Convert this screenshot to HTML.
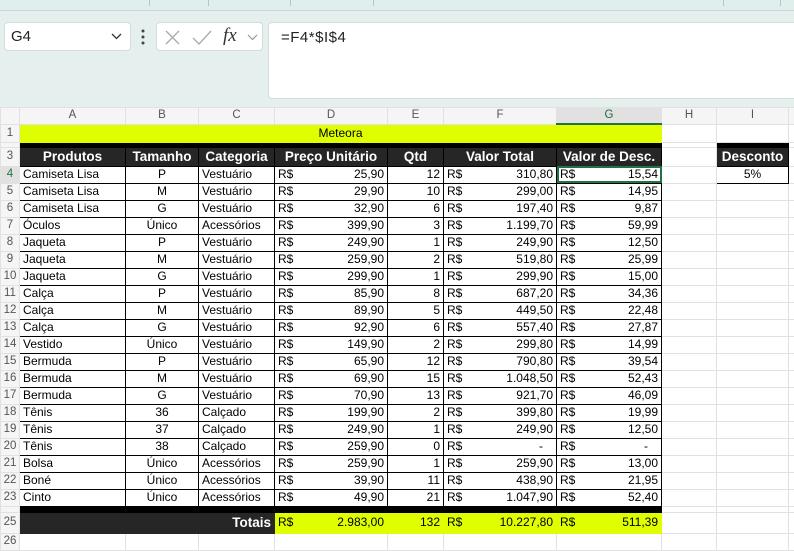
<!DOCTYPE html>
<html><head><meta charset="utf-8">
<style>
*{margin:0;padding:0;box-sizing:border-box}
body{width:794px;height:545px;overflow:hidden;background:#fff;font-family:"Liberation Sans",Arial,sans-serif;position:relative}
.top{position:absolute;left:0;top:0;width:794px;height:107px;background:#e4efee}
.strip{position:absolute;left:0;top:0;width:794px;height:11px;background:#e1eeee;border-bottom:1px solid #c9d6d6}
.strip i{position:absolute;top:0;width:1px;height:6px;background:#b9c4c4}
.nb{position:absolute;left:4px;top:22px;width:127px;height:29px;background:#fff;border:1px solid #d4dcdc;border-radius:4px;font-size:15px;line-height:27px;padding-left:6px;color:#222}
.fb{position:absolute;left:156px;top:22px;width:107px;height:29px;background:#fff;border:1px solid #d4dcdc;border-radius:4px}
.fi{position:absolute;left:268px;top:22px;width:530px;height:77px;background:#fff;border:1px solid #d4dcdc;border-radius:4px;font-size:15px;padding:6px 0 0 12px;color:#222;font-family:"Liberation Sans",sans-serif;letter-spacing:.5px}
table{position:absolute;left:0;top:107px;width:798px;border-collapse:collapse;table-layout:fixed;font-size:12px}
td{height:17px;padding:0 3px;white-space:nowrap;overflow:hidden;border:1px solid #e1e1e1;line-height:15px;color:#000}
tr.ch td{background:#f5f5f5;color:#555;text-align:center;height:16px;border-color:#e1e1e1;font-size:11.5px}
td.rh{background:#f5f5f5;color:#555;text-align:center;font-size:11.5px;padding:0;border-color:#e1e1e1}
.y{background:#dfff00}
.k{background:#000;border-color:#000}
.h{background:#262626;color:#fff;font-weight:bold;font-size:13.5px;text-align:center;border:1px solid #000;padding:0}
.d{border:1px solid #000}
.c{text-align:center}.r{text-align:right}
.m span{float:left}.m{text-align:right}
.sel{outline:2px solid #217346;outline-offset:-2px}
</style></head><body>
<div class="top">
<div class="strip"><i style="left:149px"></i><i style="left:208px"></i><i style="left:290px"></i><i style="left:373px"></i><i style="left:723px"></i><i style="left:780px"></i></div>
<div class="nb">G4<svg style="position:absolute;right:8px;top:10px" width="11" height="7"><path d="M1 1L5.5 5.5L10 1" stroke="#333" stroke-width="1.3" fill="none"/></svg></div>
<svg style="position:absolute;left:141px;top:29px" width="4" height="16"><circle cx="2" cy="2" r="1.5" fill="#444"/><circle cx="2" cy="8" r="1.5" fill="#444"/><circle cx="2" cy="14" r="1.5" fill="#444"/></svg>
<div class="fb">
<svg style="position:absolute;left:8px;top:7px" width="15" height="15"><path d="M1 1L14 14M14 1L1 14" stroke="#aaa" stroke-width="1.3"/></svg>
<svg style="position:absolute;left:35px;top:7px" width="20" height="15"><path d="M1 8L7 14L19 1" stroke="#aaa" stroke-width="1.3" fill="none"/></svg>
<span style="position:absolute;left:66px;top:2px;font-family:'Liberation Serif',serif;font-style:italic;font-size:19px;color:#333">fx</span>
<svg style="position:absolute;left:90px;top:11px" width="11" height="7"><path d="M1 1L5.5 5.5L10 1" stroke="#999" stroke-width="1.2" fill="none"/></svg>
</div>
<div class="fi">=F4*$I$4</div>
</div>
<table>
<colgroup><col style="width:19px"><col style="width:106px"><col style="width:73px"><col style="width:76px"><col style="width:113px"><col style="width:56px"><col style="width:113px"><col style="width:105px"><col style="width:55px"><col style="width:72px"><col style="width:10px"></colgroup>
<tr class="ch"><td></td><td>A</td><td>B</td><td>C</td><td>D</td><td>E</td><td>F</td><td style="background:#e1e1e1;color:#1e6b40;border-bottom:2px solid #217346">G</td><td>H</td><td>I</td><td></td></tr>
<tr><td class="rh" style="height:18px">1</td><td class="y" colspan="7" style="text-align:center;border-color:#dfff00">Meteora</td><td></td><td></td><td></td></tr>
<tr><td class="rh" style="height:5px;font-size:0"></td><td class="k" colspan="7" style="height:5px"></td><td style="height:5px"></td><td class="k" style="height:5px"></td><td style="height:5px"></td></tr>
<tr><td class="rh" style="height:19px">3</td><td class="h">Produtos</td><td class="h">Tamanho</td><td class="h">Categoria</td><td class="h">Preço Unitário</td><td class="h">Qtd</td><td class="h">Valor Total</td><td class="h">Valor de Desc.</td><td></td><td class="h">Desconto</td><td></td></tr>
<tr><td class="rh" style="color:#217346;background:#e1e1e1">4</td><td class="d">Camiseta Lisa</td><td class="d c">P</td><td class="d">Vestuário</td><td class="d m"><span>R$</span>25,90</td><td class="d r">12</td><td class="d m"><span>R$</span>310,80</td><td class="d m sel"><span>R$</span>15,54</td><td></td><td class="d c">5%</td><td></td></tr>
<tr><td class="rh">5</td><td class="d">Camiseta Lisa</td><td class="d c">M</td><td class="d">Vestuário</td><td class="d m"><span>R$</span>29,90</td><td class="d r">10</td><td class="d m"><span>R$</span>299,00</td><td class="d m"><span>R$</span>14,95</td><td></td><td></td><td></td></tr>
<tr><td class="rh">6</td><td class="d">Camiseta Lisa</td><td class="d c">G</td><td class="d">Vestuário</td><td class="d m"><span>R$</span>32,90</td><td class="d r">6</td><td class="d m"><span>R$</span>197,40</td><td class="d m"><span>R$</span>9,87</td><td></td><td></td><td></td></tr>
<tr><td class="rh">7</td><td class="d">Óculos</td><td class="d c">Único</td><td class="d">Acessórios</td><td class="d m"><span>R$</span>399,90</td><td class="d r">3</td><td class="d m"><span>R$</span>1.199,70</td><td class="d m"><span>R$</span>59,99</td><td></td><td></td><td></td></tr>
<tr><td class="rh">8</td><td class="d">Jaqueta</td><td class="d c">P</td><td class="d">Vestuário</td><td class="d m"><span>R$</span>249,90</td><td class="d r">1</td><td class="d m"><span>R$</span>249,90</td><td class="d m"><span>R$</span>12,50</td><td></td><td></td><td></td></tr>
<tr><td class="rh">9</td><td class="d">Jaqueta</td><td class="d c">M</td><td class="d">Vestuário</td><td class="d m"><span>R$</span>259,90</td><td class="d r">2</td><td class="d m"><span>R$</span>519,80</td><td class="d m"><span>R$</span>25,99</td><td></td><td></td><td></td></tr>
<tr><td class="rh">10</td><td class="d">Jaqueta</td><td class="d c">G</td><td class="d">Vestuário</td><td class="d m"><span>R$</span>299,90</td><td class="d r">1</td><td class="d m"><span>R$</span>299,90</td><td class="d m"><span>R$</span>15,00</td><td></td><td></td><td></td></tr>
<tr><td class="rh">11</td><td class="d">Calça</td><td class="d c">P</td><td class="d">Vestuário</td><td class="d m"><span>R$</span>85,90</td><td class="d r">8</td><td class="d m"><span>R$</span>687,20</td><td class="d m"><span>R$</span>34,36</td><td></td><td></td><td></td></tr>
<tr><td class="rh">12</td><td class="d">Calça</td><td class="d c">M</td><td class="d">Vestuário</td><td class="d m"><span>R$</span>89,90</td><td class="d r">5</td><td class="d m"><span>R$</span>449,50</td><td class="d m"><span>R$</span>22,48</td><td></td><td></td><td></td></tr>
<tr><td class="rh">13</td><td class="d">Calça</td><td class="d c">G</td><td class="d">Vestuário</td><td class="d m"><span>R$</span>92,90</td><td class="d r">6</td><td class="d m"><span>R$</span>557,40</td><td class="d m"><span>R$</span>27,87</td><td></td><td></td><td></td></tr>
<tr><td class="rh">14</td><td class="d">Vestido</td><td class="d c">Único</td><td class="d">Vestuário</td><td class="d m"><span>R$</span>149,90</td><td class="d r">2</td><td class="d m"><span>R$</span>299,80</td><td class="d m"><span>R$</span>14,99</td><td></td><td></td><td></td></tr>
<tr><td class="rh">15</td><td class="d">Bermuda</td><td class="d c">P</td><td class="d">Vestuário</td><td class="d m"><span>R$</span>65,90</td><td class="d r">12</td><td class="d m"><span>R$</span>790,80</td><td class="d m"><span>R$</span>39,54</td><td></td><td></td><td></td></tr>
<tr><td class="rh">16</td><td class="d">Bermuda</td><td class="d c">M</td><td class="d">Vestuário</td><td class="d m"><span>R$</span>69,90</td><td class="d r">15</td><td class="d m"><span>R$</span>1.048,50</td><td class="d m"><span>R$</span>52,43</td><td></td><td></td><td></td></tr>
<tr><td class="rh">17</td><td class="d">Bermuda</td><td class="d c">G</td><td class="d">Vestuário</td><td class="d m"><span>R$</span>70,90</td><td class="d r">13</td><td class="d m"><span>R$</span>921,70</td><td class="d m"><span>R$</span>46,09</td><td></td><td></td><td></td></tr>
<tr><td class="rh">18</td><td class="d">Tênis</td><td class="d c">36</td><td class="d">Calçado</td><td class="d m"><span>R$</span>199,90</td><td class="d r">2</td><td class="d m"><span>R$</span>399,80</td><td class="d m"><span>R$</span>19,99</td><td></td><td></td><td></td></tr>
<tr><td class="rh">19</td><td class="d">Tênis</td><td class="d c">37</td><td class="d">Calçado</td><td class="d m"><span>R$</span>249,90</td><td class="d r">1</td><td class="d m"><span>R$</span>249,90</td><td class="d m"><span>R$</span>12,50</td><td></td><td></td><td></td></tr>
<tr><td class="rh">20</td><td class="d">Tênis</td><td class="d c">38</td><td class="d">Calçado</td><td class="d m"><span>R$</span>259,90</td><td class="d r">0</td><td class="d m"><span>R$</span>-&nbsp;&nbsp;&nbsp;</td><td class="d m"><span>R$</span>-&nbsp;&nbsp;&nbsp;</td><td></td><td></td><td></td></tr>
<tr><td class="rh">21</td><td class="d">Bolsa</td><td class="d c">Único</td><td class="d">Acessórios</td><td class="d m"><span>R$</span>259,90</td><td class="d r">1</td><td class="d m"><span>R$</span>259,90</td><td class="d m"><span>R$</span>13,00</td><td></td><td></td><td></td></tr>
<tr><td class="rh">22</td><td class="d">Boné</td><td class="d c">Único</td><td class="d">Acessórios</td><td class="d m"><span>R$</span>39,90</td><td class="d r">11</td><td class="d m"><span>R$</span>438,90</td><td class="d m"><span>R$</span>21,95</td><td></td><td></td><td></td></tr>
<tr><td class="rh">23</td><td class="d">Cinto</td><td class="d c">Único</td><td class="d">Acessórios</td><td class="d m"><span>R$</span>49,90</td><td class="d r">21</td><td class="d m"><span>R$</span>1.047,90</td><td class="d m"><span>R$</span>52,40</td><td></td><td></td><td></td></tr>
<tr><td class="rh" style="height:6px;font-size:0"></td><td class="k" colspan="7" style="height:6px"></td><td style="height:6px"></td><td style="height:6px"></td><td style="height:6px"></td></tr>
<tr><td class="rh" style="height:21px">25</td><td colspan="3" style="background:#262626;border-color:#262626;color:#fff;font-weight:bold;font-size:13.5px;text-align:right">Totais</td><td class="y m" style="border-color:#dfff00"><span>R$</span>2.983,00</td><td class="y r" style="border-color:#dfff00">132</td><td class="y m" style="border-color:#dfff00"><span>R$</span>10.227,80</td><td class="y m" style="border-color:#dfff00"><span>R$</span>511,39</td><td></td><td></td><td></td></tr>
<tr><td class="rh">26</td><td></td><td></td><td></td><td></td><td></td><td></td><td></td><td></td><td></td><td></td></tr>
</table>
</body></html>
